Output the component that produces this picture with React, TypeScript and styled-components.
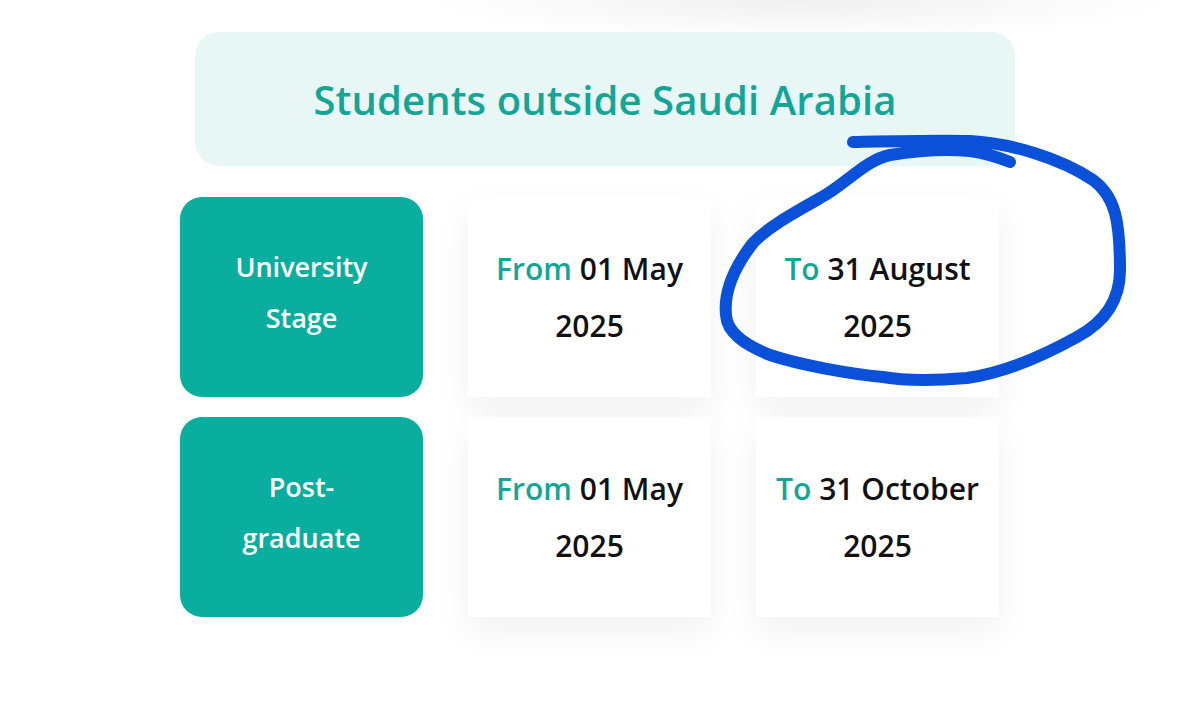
import * as React from 'react'
import styled, { createGlobalStyle } from 'styled-components'

const GlobalStyle = createGlobalStyle`
    html, body {
        margin: 0;
        padding: 0;
        background: #ffffff;
    }
    body {
        font-family: 'Open Sans', 'Noto Sans', sans-serif;
    }
`

const Page = styled.div`
    position: relative;
    width: 1179px;
    height: 709px;
    overflow: hidden;
    padding-top: 32px;
    box-sizing: border-box;
    background:
        radial-gradient(ellipse 380px 40px at 800px 0px, rgba(0, 0, 0, 0.06), rgba(0, 0, 0, 0) 100%),
        #ffffff;
`

const Header = styled.div`
    margin-left: 195px;
    width: 820px;
    height: 134px;
    border-radius: 24px;
    background: #e8f6f6;
    display: flex;
    align-items: center;
    justify-content: center;
`

const Title = styled.h2`
    margin: 0;
    font-size: 40px;
    font-weight: 600;
    color: #13a696;
    letter-spacing: 0.1px;
`

const Grid = styled.div`
    margin: 31px 0 0 180px;
    display: grid;
    grid-template-columns: 243px 243px 243px;
    grid-auto-rows: 200px;
    column-gap: 45px;
    row-gap: 20px;
`

const StageCard = styled.div`
    border-radius: 22px;
    background: #09ae9f;
    color: #ffffff;
    display: flex;
    align-items: center;
    justify-content: center;
    text-align: center;
    font-size: 27px;
    font-weight: 600;
    line-height: 51px;
    padding: 0 40px 10px;
`

const DateCard = styled.div`
    background: #ffffff;
    box-shadow: 0 14px 34px rgba(0, 0, 0, 0.06);
    display: flex;
    align-items: center;
    justify-content: center;
    text-align: center;
    font-size: 30px;
    font-weight: 600;
    line-height: 57px;
    color: #111111;
    padding: 0 14px;
`

const Label = styled.span`
    color: #13a696;
`

const Scribble = styled.svg`
    position: absolute;
    left: 0;
    top: 0;
    pointer-events: none;
`

const rows = [
    { stage: 'University Stage', from: '01 May 2025', to: '31 August 2025' },
    { stage: 'Post-graduate', from: '01 May 2025', to: '31 October 2025' },
]

const App: React.FC = () => {
    return (
        <Page>
            <GlobalStyle />
            <Header>
                <Title>Students outside Saudi Arabia</Title>
            </Header>
            <Grid>
                {rows.map((r) => (
                    <React.Fragment key={r.stage}>
                        <StageCard>{r.stage}</StageCard>
                        <DateCard>
                            <div>
                                <Label>From</Label> {r.from}
                            </div>
                        </DateCard>
                        <DateCard>
                            <div>
                                <Label>To</Label> {r.to}
                            </div>
                        </DateCard>
                    </React.Fragment>
                ))}
            </Grid>
            {/* hand-drawn marker circle */}
            <Scribble width='1179' height='709' viewBox='0 0 1179 709'>
                <path
                    d='M853 142 C 900 141, 940 140, 970 141 C 1010 143, 1060 158, 1093 180 C 1115 196, 1120 220, 1120 270 C 1120 300, 1105 322, 1077 337 C 1050 352, 1010 372, 967 378 C 930 381, 900 380, 883 377 C 850 374, 800 365, 770 355 C 745 345, 727 333, 726 315 C 724 295, 732 270, 753 243 C 770 225, 800 210, 820 198 C 845 185, 865 160, 890 155 C 920 150, 950 149, 970 151 C 985 153, 1000 158, 1010 162'
                    fill='none'
                    stroke='#0a50d8'
                    strokeWidth='12'
                    strokeLinecap='round'
                    strokeLinejoin='round'
                />
            </Scribble>
        </Page>
    )
}

export default App
